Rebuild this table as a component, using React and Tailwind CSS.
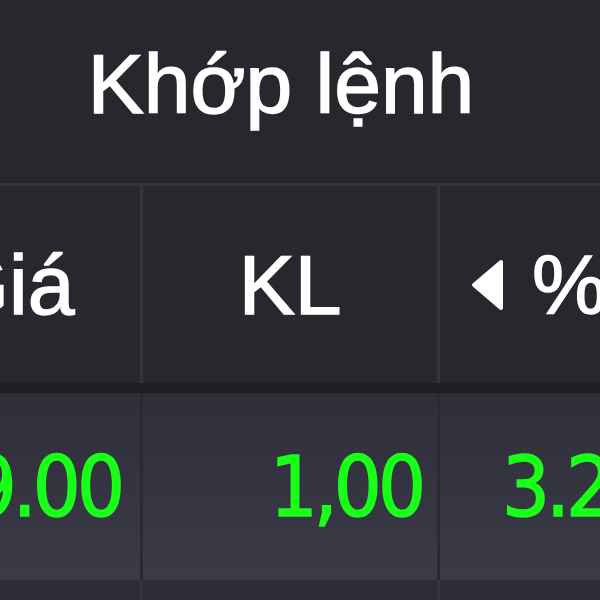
export default function App() {
    const head = { fontFamily: '"Liberation Sans", Arial, sans-serif' };
    const num = { fontFamily: '"DejaVu Sans Condensed", "DejaVu Sans", Verdana, sans-serif', fontStretch: 'condensed' };

    return (
        <div className="w-[600px] h-[600px] overflow-hidden bg-[#27282e]">
            <div className="w-[822px] -ml-[122px]">
                {/* group header */}
                <div className="h-[186px] flex items-center justify-center border-b-[3px] border-[#34353b] pb-4 pr-[16px]">
                    <span className="text-[84px] leading-none text-white [-webkit-text-stroke:1.5px_white]" style={head}>Khớp lệnh</span>
                </div>

                {/* column headers */}
                <div className="grid grid-cols-[265px_297px_260px] h-[197px]">
                    <div className="flex items-center justify-center border-r-[3px] border-[#34353b]">
                        <span className="text-[84px] leading-none text-white [-webkit-text-stroke:1.5px_white]" style={head}>Giá</span>
                    </div>
                    <div className="flex items-center justify-center border-r-[3px] border-[#34353b]">
                        <span className="text-[84px] leading-none text-white [-webkit-text-stroke:1.5px_white]" style={head}>KL</span>
                    </div>
                    <div className="flex items-center pl-[30px] gap-[28px]">
                        <svg width="34" height="52" viewBox="0 0 34 52">
                            <path d="M31 3 L4 26 L31 49 Z" fill="#fff" stroke="#fff" strokeWidth="4" strokeLinejoin="round" />
                        </svg>
                        <span className="text-[84px] leading-none text-white [-webkit-text-stroke:1.5px_white]" style={head}>%</span>
                    </div>
                </div>

                <div className="h-[10px] bg-gradient-to-b from-[#202126] to-[#1c1d21]" />

                {/* data row */}
                <div className="grid grid-cols-[265px_297px_260px] h-[187px] bg-gradient-to-b from-[#2e2f39] to-[#3a3b47]">
                    <div className="flex items-center justify-end pr-[19px] border-r-[3px] border-[#2a2b32]">
                        <span className="text-[84px] leading-none tracking-[-4px] text-[#19ff19] [-webkit-text-stroke:1.5px_#19ff19]" style={num}>9.00</span>
                    </div>
                    <div className="flex items-center justify-end pr-[15px] border-r-[3px] border-[#2a2b32]">
                        <span className="text-[84px] leading-none tracking-[-4px] text-[#19ff19] [-webkit-text-stroke:1.5px_#19ff19]" style={num}>1,00</span>
                    </div>
                    <div className="flex items-center pl-[62px]">
                        <span className="text-[84px] leading-none tracking-[-4px] text-[#19ff19] [-webkit-text-stroke:1.5px_#19ff19]" style={num}>3.20</span>
                    </div>
                </div>

                <div className="h-[20px] grid grid-cols-[265px_297px_260px] bg-[#2c2d36]">
                    <div className="border-r-[3px] border-[#34353d]" />
                    <div className="border-r-[3px] border-[#34353d]" />
                    <div />
                </div>
            </div>
        </div>
    );
}
